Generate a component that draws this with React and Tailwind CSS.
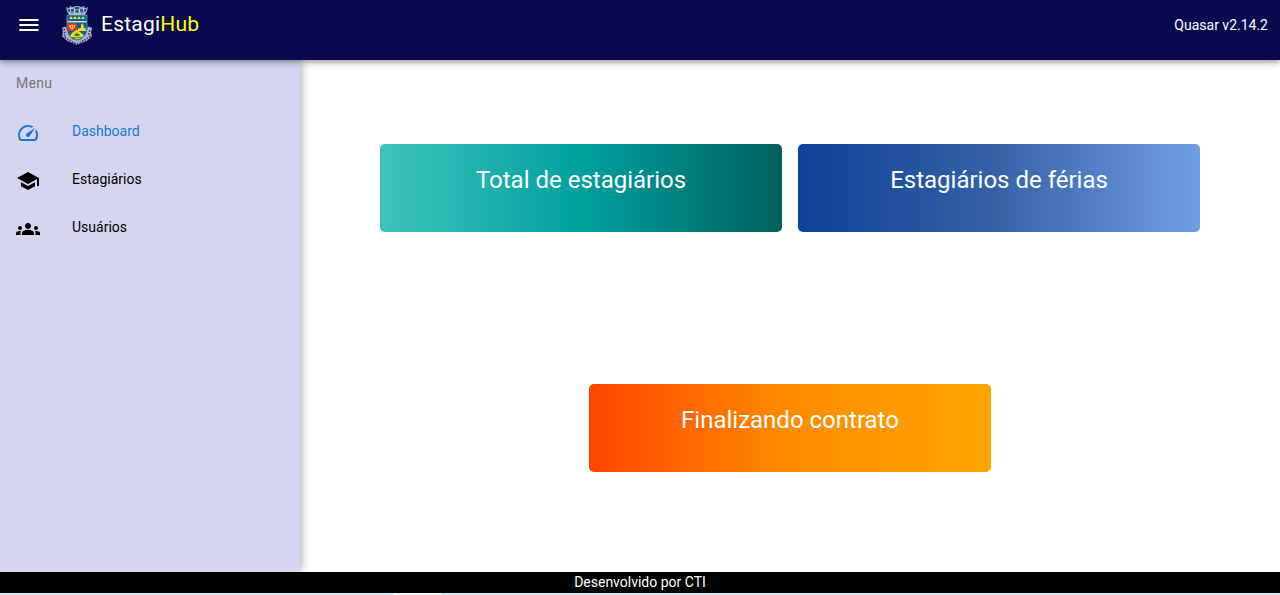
import { MdSpeed, MdSchool, MdGroups } from "react-icons/md";

const menu = [
  { label: "Dashboard", Icon: MdSpeed, active: true },
  { label: "Estagiários", Icon: MdSchool },
  { label: "Usuários", Icon: MdGroups },
];

function Crest() {
  return (
    <svg className="h-[39px] w-[30px]" viewBox="0 1 30 36" preserveAspectRatio="none">
      <path d="M4 2l3 1 1-2 3 1 2-1h4l2 1 3-1 1 2 3-1-1 4-2 3H7L5 6z" fill="#8fa8bf" />
      <path d="M6 4h2v2H6zM9 4h3v2H9zM13 2h4v2h-4zM13.500 5h3v2h-3zM18 4h3v2h-3zM22 4h2v2h-2zM9 7h2v1H9zM19 7h2v1h-2z" fill="#274a78" />
      <path d="M7 8.500h16M8.500 3v2M12.500 4v3M17.500 4v3M21.500 3v2" stroke="#dde5e9" strokeWidth=".8" />
      <path d="M0 21l4-1 2 7 5 5h8l5-5 2-7 4 1-1 5 1 3-5 4-5 2-5 2-5-2-5-2-5-4 1-3z" fill="#b4b6ce" />
      <path d="M2 22l1 5-1 2 4 3 3 1 2 2 4 1 4-1 2-2 3-1 4-3-1-2 1-5" fill="none" stroke="#33325f" strokeWidth="1.6" strokeDasharray="1.500 1.300" />
      <path d="M5 9.500h20V23q0 7-10 10Q5 30 5 23z" fill="#075f9e" stroke="#8fb9d0" strokeWidth=".6" />
      <path d="M5.500 14.800h19v1.400h-19z" fill="#cfe3e6" />
      <path d="M8 11h2v2H8zM12 11h2v2h-2zM16 11h2v2h-2zM20 11h2v2h-2z" fill="#f6dc18" />
      <path d="M7 12.300h16" stroke="#e9d431" strokeWidth=".8" />
      <path d="M5.500 17H15v7H5.500z" fill="#dc3525" />
      <path d="M7 18.500l2 .5 1-1 1.500 1 2-1-1 3-2.500 2-2.500-2z" fill="#f4cf25" />
      <path d="M9 20h1M11 20h1" stroke="#a64e18" strokeWidth="1" />
      <path d="M16 24v-2l3-1v-3l2-1 1 4 2 1v2z" fill="#f5dc19" />
      <path d="M8 29l2-3 3-2 2-1 3 2 4 3-2 2-5 2z" fill="#f3e514" />
      <path d="M13 26.500h4l1 1.500-3 1-3-1z" fill="#24794b" />
      <path d="M10 30h10M15 25v2" stroke="#347f42" strokeWidth=".8" />
    </svg>
  );
}

function Card({ title, className }) {
  return (
    <div className={"h-[88px] w-[402px] rounded-[5px] pt-5 text-center text-2xl leading-8 text-white " + className}>
      {title}
    </div>
  );
}

export default function App() {
  return (
    <div className="flex h-[595px] w-full flex-col overflow-hidden bg-white font-['Roboto',sans-serif] text-sm leading-[21px] text-black">
      <header className="relative z-20 flex h-[60px] shrink-0 items-start bg-[#090950] text-white shadow-[0_2px_4px_-1px_rgba(0,0,0,.2),0_4px_5px_rgba(0,0,0,.14),0_1px_10px_rgba(0,0,0,.12)]">
        <button className="ml-[17px] mt-[13px]" aria-label="Menu">
          <svg className="size-6" viewBox="0 0 24 24" fill="currentColor">
            <path d="M2.300 6h19.200v2H2.300zM2.300 11h19.200v2H2.300zM2.300 16h19.200v2H2.300z" />
          </svg>
        </button>
        <div className="ml-[21px] mt-1.5"><Crest /></div>
        <h1 className="ml-[9px] mt-2 grow text-[21px] leading-8 tracking-[0.21px]">
          Estagi<span className="text-[#ffff00]">Hub</span>
        </h1>
        <span className="mr-3 mt-[15px]">Quasar v2.14.2</span>
      </header>
      <div className="flex min-h-0 grow">
        <aside className="z-10 w-[300px] shrink-0 bg-[#d5d5f0] shadow-[0_0_10px_rgba(0,0,0,.2),0_0_10px_rgba(0,0,0,.24)]">
          <div className="h-[49px] px-4 pt-[13px] tracking-[0.25px] text-[#757575]">Menu</div>
          <nav>
            {menu.map(({ label, Icon, active }) => (
              <a key={label} className={"flex h-12 items-start px-4 " + (active ? "text-[#1976d2]" : "text-black")}>
                <Icon className="mt-3 size-6" />
                <span className="ml-8 mt-3">{label}</span>
              </a>
            ))}
          </nav>
        </aside>
        <main className="flex grow flex-col items-center pt-[84px]">
          <div className="flex gap-4">
            <Card title="Total de estagiários" className="bg-[linear-gradient(90deg,#3ec4bc,#00a09e_50%,#00605d)]" />
            <Card title="Estagiários de férias" className="bg-[linear-gradient(90deg,#0b4198,#3663a6_50%,#719fe5)]" />
          </div>
          <div className="mt-[152px]">
            <Card title="Finalizando contrato" className="bg-[linear-gradient(90deg,#ff4500,#ff8c00_50%,#ffa500)]" />
          </div>
        </main>
      </div>
      <footer className="z-20 h-[21px] shrink-0 bg-black text-center text-white">Desenvolvido por CTI</footer>
      <div className="z-20 flex h-0.5 shrink-0">
        <div className="w-[394px] bg-[#d5e5ef]" />
        <div className="w-12 bg-[#f4f9fb]" />
        <div className="grow bg-[#d5e5ef]" />
      </div>
    </div>
  );
}
